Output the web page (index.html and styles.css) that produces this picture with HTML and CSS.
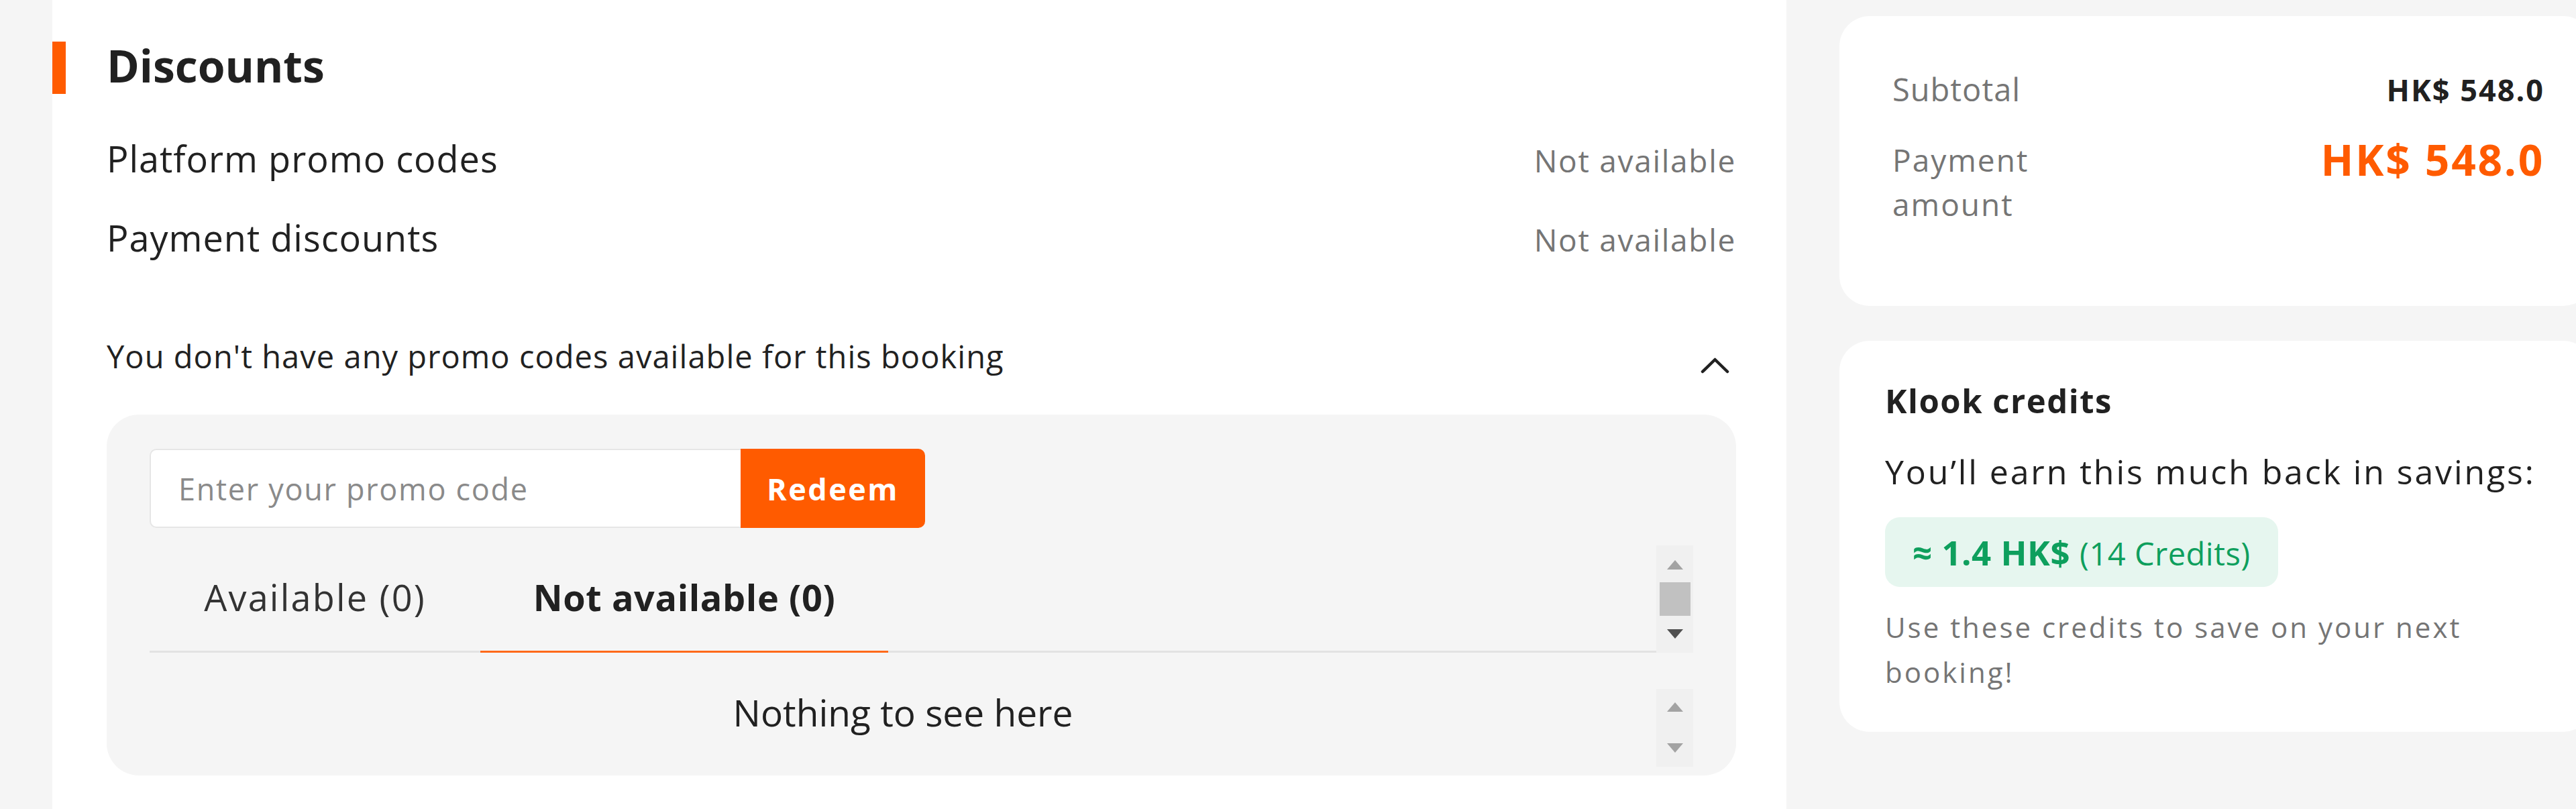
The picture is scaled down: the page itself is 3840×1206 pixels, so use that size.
FILE: index.html
```html
<!DOCTYPE html>
<html lang="en">
<head>
<meta charset="utf-8">
<title>Discounts</title>
<link rel="stylesheet" href="styles.css">
</head>
<body>
<div class="page">
  <main class="panel">
    <div class="title-row">
      <span class="bar"></span>
      <h2 class="title">Discounts</h2>
    </div>
    <div class="disc-row">
      <span class="disc-label">Platform promo codes</span>
      <span class="disc-value">Not available</span>
    </div>
    <div class="disc-row">
      <span class="disc-label">Payment discounts</span>
      <span class="disc-value">Not available</span>
    </div>
    <div class="hint-row">
      <span class="hint">You don't have any promo codes available for this booking</span>
      <svg class="chevron" width="43" height="24" viewBox="0 0 43 24"><polyline points="3,21 21.5,3 40,21" fill="none" stroke="#212121" stroke-width="4.5" stroke-linecap="round" stroke-linejoin="round"/></svg>
    </div>
    <section class="promo-box">
      <div class="redeem-group">
        <div class="promo-input">Enter your promo code</div>
        <div class="redeem-btn">Redeem</div>
      </div>
      <div class="tabs-row">
        <div class="tabs">
          <div class="tab tab-first">Available (0)</div>
          <div class="tab tab-active">Not available (0)</div>
        </div>
        <div class="sbar sbar-tabs">
          <span class="arrow-up"></span>
          <span class="thumb"></span>
          <span class="arrow-down dark"></span>
        </div>
      </div>
      <div class="content-row">
        <div class="empty">Nothing to see here</div>
        <div class="sbar sbar-content">
          <span class="arrow-up"></span>
          <span class="arrow-down"></span>
        </div>
      </div>
    </section>
  </main>
  <aside class="side">
    <div class="card card-total">
      <div class="sum-row">
        <span class="sum-label">Subtotal</span>
        <span class="sum-value">HK$ 548.0</span>
      </div>
      <div class="pay-row">
        <span class="pay-label">Payment amount</span>
        <span class="pay-value">HK$ 548.0</span>
      </div>
    </div>
    <div class="card card-credits">
      <h3 class="credits-title">Klook credits</h3>
      <p class="credits-earn">You’ll earn this much back in savings:</p>
      <div class="credits-badge"><span class="badge-strong">≈ 1.4 HK$</span><span class="badge-light">(14 Credits)</span></div>
      <p class="credits-note">Use these credits to save on your next booking!</p>
    </div>
  </aside>
</div>
</body>
</html>
```

FILE: styles.css
```css
html, body {
  margin: 0;
  padding: 0;
  overflow: hidden;
  background: #f5f5f5;
}
body {
  font-family: "Open Sans", "Noto Sans", "Liberation Sans", sans-serif;
  color: #212121;
}
.page {
  display: flex;
  width: 3866px;
  height: 1206px;
  background: #f5f5f5;
}
.panel {
  margin-left: 78px;
  width: 2585px;
  box-sizing: border-box;
  padding: 0 75px 0 81px;
  background: #ffffff;
}
.title-row {
  display: flex;
  align-items: center;
  height: 78px;
  margin: 62px 0 0 -81px;
}
.bar {
  width: 20px;
  height: 78px;
  background: #ff5b00;
}
.title {
  margin: 0 0 0 61px;
  padding-bottom: 9px;
  font-size: 66px;
  font-weight: 700;
  line-height: 78px;
}
.disc-row {
  display: flex;
  justify-content: space-between;
  align-items: baseline;
  height: 118px;
  line-height: 118px;
}
.title-row + .disc-row {
  margin-top: 37px;
}
.disc-label {
  font-size: 54px;
  letter-spacing: 1px;
}
.disc-value {
  font-size: 46px;
  letter-spacing: 1.7px;
  color: #757575;
}
.hint-row {
  display: flex;
  justify-content: space-between;
  align-items: center;
  height: 80px;
  margin-top: 78px;
}
.hint {
  font-size: 47px;
  letter-spacing: 1.05px;
  line-height: 80px;
}
.chevron {
  margin: 28px 10px 0 0;
}
.promo-box {
  margin-top: 47px;
  padding: 51px 64px 13px 64px;
  background: #f5f5f5;
  border-radius: 48px;
}
.redeem-group {
  display: flex;
  width: 1156px;
  height: 118px;
}
.promo-input {
  flex: 1;
  display: flex;
  align-items: center;
  box-sizing: border-box;
  padding-left: 41px;
  background: #ffffff;
  border: 2px solid #e6e6e6;
  border-right: none;
  border-radius: 10px 0 0 10px;
  font-size: 45px;
  letter-spacing: 1.7px;
  color: #8a8a8a;
}
.redeem-btn {
  width: 275px;
  display: flex;
  align-items: center;
  justify-content: center;
  background: #ff5b00;
  border-radius: 0 10px 10px 0;
  color: #ffffff;
  font-size: 45px;
  font-weight: 700;
  letter-spacing: 2.5px;
}
.tabs-row {
  display: flex;
  height: 160px;
  margin-top: 26px;
}
.tabs {
  flex: 1;
  display: flex;
  border-bottom: 3px solid #e3e3e3;
}
.tab {
  box-sizing: border-box;
  text-align: center;
  font-size: 54px;
  line-height: 154px;
  height: 160px;
  margin-bottom: -3px;
  border-bottom: 3px solid transparent;
  color: #333333;
}
.tab-first {
  width: 493px;
  letter-spacing: 2.2px;
}
.tab-active {
  width: 608px;
  font-weight: 700;
  letter-spacing: 0.6px;
  color: #212121;
  border-bottom-color: #ff6a1a;
}
.sbar {
  width: 55px;
  display: flex;
  flex-direction: column;
  align-items: center;
  background: #f0f0f0;
}
.arrow-up {
  width: 0;
  height: 0;
  border-left: 12.5px solid transparent;
  border-right: 12.5px solid transparent;
  border-bottom: 14px solid #a3a3a3;
}
.arrow-down {
  width: 0;
  height: 0;
  border-left: 12.5px solid transparent;
  border-right: 12.5px solid transparent;
  border-top: 14px solid #a3a3a3;
}
.arrow-down.dark {
  border-top-color: #505050;
}
.thumb {
  width: 46px;
  height: 50px;
  background: #c1c1c1;
}
.sbar-tabs {
  padding-top: 22px;
  box-sizing: border-box;
}
.sbar-tabs .thumb {
  margin-top: 19px;
}
.sbar-tabs .arrow-down {
  margin-top: 20px;
}
.content-row {
  display: flex;
  height: 116px;
  margin-top: 54px;
}
.empty {
  flex: 1;
  text-align: center;
  font-size: 55px;
  line-height: 70px;
}
.sbar-content {
  padding-top: 20px;
  box-sizing: border-box;
}
.sbar-content .arrow-down {
  margin-top: 47px;
}
.side {
  display: flex;
  flex-direction: column;
  gap: 52px;
  padding: 24px 0 0 79px;
}
.card {
  width: 1124px;
  box-sizing: border-box;
  background: #ffffff;
  border-radius: 45px;
}
.card-total {
  height: 432px;
  padding: 76px 73px 0 79px;
}
.sum-row {
  display: flex;
  justify-content: space-between;
  align-items: baseline;
  line-height: 66px;
}
.sum-label {
  font-size: 47px;
  letter-spacing: 1px;
  color: #757575;
}
.sum-value {
  font-size: 45px;
  font-weight: 700;
  letter-spacing: 2px;
  color: #212121;
}
.pay-row {
  display: flex;
  justify-content: space-between;
  align-items: flex-start;
  margin-top: 38px;
}
.pay-label {
  width: 260px;
  font-size: 46px;
  letter-spacing: 2px;
  line-height: 66px;
  color: #757575;
}
.pay-value {
  font-size: 64px;
  font-weight: 700;
  letter-spacing: 2.7px;
  line-height: 66px;
  color: #ff5b00;
}
.card-credits {
  padding: 56px 40px 56px 68px;
}
.credits-title {
  margin: 0;
  font-size: 49px;
  font-weight: 700;
  letter-spacing: 1.5px;
  line-height: 66px;
}
.credits-earn {
  margin: 40px 0 0 0;
  font-size: 50px;
  letter-spacing: 2.9px;
  line-height: 66px;
  white-space: nowrap;
}
.credits-badge {
  display: flex;
  align-items: baseline;
  width: fit-content;
  margin-top: 35px;
  padding: 0 41px;
  height: 104px;
  line-height: 104px;
  background: #e6f6ef;
  border-radius: 22px;
  color: #0e9f5d;
}
.badge-strong {
  font-size: 51px;
  font-weight: 700;
  letter-spacing: 0.5px;
}
.badge-light {
  margin-left: 14px;
  font-size: 47px;
  letter-spacing: 0.5px;
}
.credits-note {
  margin: 26px 0 0 0;
  font-size: 42px;
  letter-spacing: 3px;
  line-height: 67px;
  color: #757575;
}
```
